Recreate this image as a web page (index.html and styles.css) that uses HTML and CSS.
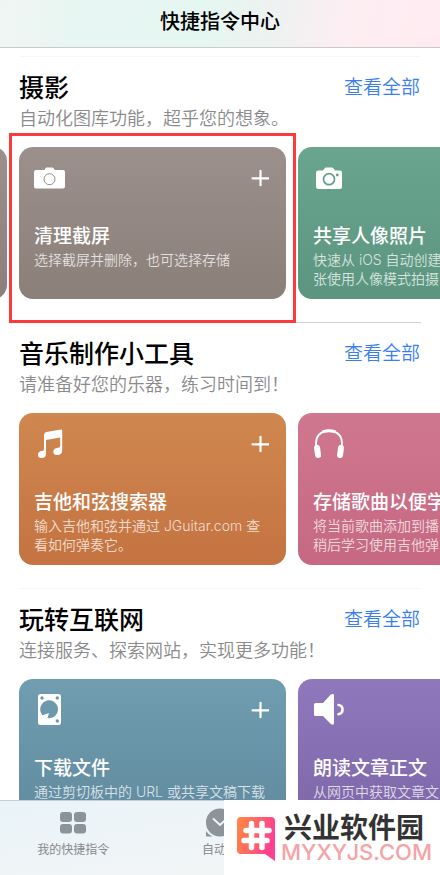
FILE: index.html
```html
<!DOCTYPE html>
<html lang="zh-CN">
<head>
<meta charset="utf-8">
<meta name="viewport" content="width=device-width, initial-scale=1">
<title>快捷指令中心</title>
<link rel="stylesheet" href="styles.css">
</head>
<body>
<svg class="sprite" aria-hidden="true">
  <symbol id="plus" viewBox="0 0 18 18"><path d="M9.500 1.800v14.400M1.500 9.300h16" fill="none" stroke="#fff" stroke-width="2.200" stroke-linecap="round"/></symbol>
</svg>
<div class="app">
  <header class="navbar"><h1 class="navbar-title">快捷指令中心</h1></header>

  <main class="gallery">
    <section class="group group-front">
      <div class="group-head">
        <h2 class="group-title">摄影</h2>
        <a class="group-link" href="#">查看全部</a>
        <p class="group-note">自动化图库功能，超乎您的想象。</p>
      </div>
      <div class="rail">
        <article class="card card-brown card-passed"></article>
        <article class="card card-brown">
          <div class="card-top">
            <svg class="card-icon" viewBox="0 0 32 32" aria-hidden="true"><path fill="#fff" d="M2 8h8.300l1-1.600Q11.700 5.500 12.800 5.500h5.400q1.100 0 1.500.9l1 1.600H29q2 0 2 2v14.500q0 2-2 2H2q-2 0-2-2V10q0-2 2-2z"/><circle cx="15.500" cy="17.200" r="5.500" fill="none" stroke="#958a84" stroke-width="1"/></svg>
            <button class="add" type="button" aria-label="添加"><svg class="add-icon" aria-hidden="true"><use href="#plus"/></svg></button>
          </div>
          <h3 class="card-title">清理截屏</h3>
          <p class="card-text">选择截屏并删除，也可选择存储</p>
        </article>
        <article class="card card-green">
          <div class="card-top">
            <svg class="card-icon" viewBox="0 0 32 32" aria-hidden="true"><path fill="#fff" d="M5.500 8.500H10l1.500-2q.6-1 1.700-1h5.600q1.100 0 1.700 1l1.500 2H27q2 0 2 2v14.200q0 2.300-2 2.300H5.500Q3 27 3 24.700V10.500q0-2 2.500-2z"/><circle cx="16" cy="17.200" r="5.500" fill="none" stroke="#649e88" stroke-width="1.700"/><circle cx="24.300" cy="13" r="1.400" fill="#649e88"/></svg>
          </div>
          <h3 class="card-title">共享人像照片</h3>
          <p class="card-text">快速从 iOS 自动创建<br>张使用人像模式拍摄</p>
        </article>
      </div>
      <div class="highlight"></div>
    </section>

    <section class="group group-ruled">
      <div class="group-head">
        <h2 class="group-title">音乐制作小工具</h2>
        <a class="group-link" href="#">查看全部</a>
        <p class="group-note">请准备好您的乐器，练习时间到！</p>
      </div>
      <div class="rail">
        <article class="card card-orange">
          <div class="card-top">
            <svg class="card-icon" viewBox="0 0 32 32" aria-hidden="true"><path fill="#fff" d="M10 7q0-2.600 2.400-3L27 1.600q1.200-.2 1.200 1v20q0 4.400-5 4.400-3.900 0-3.900-3.100 0-3 3.600-3.800l2-.5q1.300-.4 1.300-1.800V9.500L12 12v13.500q0 4.500-4.500 4.500Q4 30 4 26.800q0-2.900 3.400-3.700l1.400-.3Q10 22.500 10 21z"/></svg>
            <button class="add" type="button" aria-label="添加"><svg class="add-icon" aria-hidden="true"><use href="#plus"/></svg></button>
          </div>
          <h3 class="card-title">吉他和弦搜索器</h3>
          <p class="card-text">输入吉他和弦并通过 JGuitar.com 查<br>看如何弹奏它。</p>
        </article>
        <article class="card card-pink">
          <div class="card-top">
            <svg class="card-icon" viewBox="0 0 32 32" aria-hidden="true"><path d="M3.200 18C2 8 7.500 3 16 3S30 8 28.800 18" fill="none" stroke="#fff" stroke-width="2"/><path d="M9.500 3.800Q16 1.600 22.500 3.800" fill="none" stroke="#fff" stroke-width="3"/><rect x="1.500" y="17" width="6" height="13" rx="2.800" fill="#fff" transform="rotate(-8 4 23)"/><rect x="24.600" y="17" width="6" height="13" rx="2.800" fill="#fff" transform="rotate(8 27 23)"/></svg>
          </div>
          <h3 class="card-title">存储歌曲以便学</h3>
          <p class="card-text">将当前歌曲添加到播<br>稍后学习使用吉他弹</p>
        </article>
      </div>
    </section>

    <section class="group">
      <div class="group-head">
        <h2 class="group-title">玩转互联网</h2>
        <a class="group-link" href="#">查看全部</a>
        <p class="group-note">连接服务、探索网站，实现更多功能！</p>
      </div>
      <div class="rail">
        <article class="card card-teal">
          <div class="card-top">
            <svg class="card-icon" viewBox="0 0 32 32" aria-hidden="true"><rect x="4" y="0" width="23" height="31" rx="2.500" fill="#fff"/><g fill="#6c99ac"><circle cx="8" cy="4" r="1.700"/><circle cx="23.300" cy="4" r="1.700"/><circle cx="23.300" cy="27" r="1.700"/><path d="M8.500 21.200A8.900 8.900 0 1 1 13.600 24L15 19z"/></g></svg>
            <button class="add" type="button" aria-label="添加"><svg class="add-icon" aria-hidden="true"><use href="#plus"/></svg></button>
          </div>
          <h3 class="card-title">下载文件</h3>
          <p class="card-text">通过剪切板中的 URL 或共享文稿下载</p>
        </article>
        <article class="card card-purple">
          <div class="card-top">
            <svg class="card-icon" viewBox="0 0 32 32" aria-hidden="true"><path fill="#fff" d="M2.500 9H10L17.800.6Q21-1 21 1.500v27.600q0 2.500-3.200 1L10 22H2.500Q1 22 1 20.500v-10Q1 9 2.500 9z"/><path d="M25.500 11q4 .6 4 4.600t-4 4.600" fill="none" stroke="#fff" stroke-width="2.600" stroke-linecap="round"/></svg>
          </div>
          <h3 class="card-title">朗读文章正文</h3>
          <p class="card-text">从网页中获取文章文</p>
        </article>
      </div>
    </section>
  </main>

  <footer class="dock">
    <nav class="tabs">
      <a class="tab" href="#">
        <svg class="tab-icon" viewBox="0 0 30 30" aria-hidden="true"><g fill="#8b9498"><rect x="2" y="4" width="12" height="10" rx="3"/><rect x="16" y="4" width="12" height="10" rx="3"/><rect x="2" y="16" width="12" height="9.500" rx="3"/><rect x="16" y="16" width="12" height="9.500" rx="3"/></g></svg>
        <span>我的快捷指令</span>
      </a>
      <a class="tab" href="#">
        <svg class="tab-icon" viewBox="0 0 30 30" aria-hidden="true"><circle cx="15" cy="14.500" r="14" fill="#8b9498"/><path d="M8 10.500l7 6.500 7-6.500" fill="none" stroke="#eef4f6" stroke-width="2"/><path d="M1 23q2.500 4 6.500 5.500H1z" fill="#8b9498"/></svg>
        <span>自动化</span>
      </a>
    </nav>
    <div class="brand">
      <svg class="brand-mark" viewBox="0 0 38 46" aria-hidden="true">
        <defs><linearGradient id="warm" x1="0" y1="0" x2="1" y2="0.300"><stop offset="0" stop-color="#ff8a3c"/><stop offset="1" stop-color="#ff4090"/></linearGradient></defs>
        <path fill="url(#warm)" d="M4 1h30q4 0 4 4v40l-10-7H4q-4 0-4-4V5q0-4 4-4z"/>
        <path d="M14.500 7.500v24M25 7.500v24M9 14.500h23M7 24.500h23" fill="none" stroke="#fff" stroke-width="5.500" stroke-linecap="round"/>
      </svg>
      <div class="brand-words">
        <strong class="brand-name">兴业软件园</strong>
        <span class="brand-site">MYXYJS.COM</span>
      </div>
    </div>
  </footer>
</div>
</body>
</html>
```
FILE: styles.css
```css
* { box-sizing: border-box; }

body {
  margin: 0;
  background: #fff;
  color: #000;
  font-family: Inter, "Noto Sans CJK SC", sans-serif;
}

h1, h2, h3, p { margin: 0; }
a { text-decoration: none; }
.sprite { position: absolute; width: 0; height: 0; }

.app {
  display: flex;
  flex-direction: column;
  height: 100vh;
  overflow: hidden;
}

.navbar {
  flex: none;
  padding: 7px 0 10px;
  border-bottom: 1px solid #c9cbcc;
  background: linear-gradient(97deg, #f0f5f3 0%, #e7f6f2 18%, #e6f6f1 48%, #eff1f1 64%, #fceef2 78%, #ffebf1 100%);
  text-align: center;
}
.navbar-title {
  font-size: 20px;
  font-weight: 500;
  line-height: 30px;
}

.gallery {
  flex: 1;
  min-height: 0;
  padding-top: 8px;
  overflow: hidden;
}

.group {
  position: relative;
  padding-bottom: 23px;
}
.group-front { z-index: 1; }
.group-head {
  display: grid;
  grid-template-columns: 1fr auto;
  align-items: center;
  margin: 0 19px 14px;
  padding-top: 14px;
  border-top: 1px solid #f7f7f7;
}
.group-ruled .group-head { border-top-color: #d2d2d4; }
.group-title {
  font-size: 25px;
  font-weight: 500;
  line-height: 34px;
}
.group-link {
  padding-right: 1px;
  color: #3a7ff2;
  font-size: 19px;
  font-weight: 350;
  line-height: 34px;
}
.group-note {
  grid-column: 1 / -1;
  color: #8a8a8c;
  font-size: 18px;
  font-weight: 350;
  line-height: 28px;
}

.rail {
  display: flex;
  gap: 12px;
  padding-left: 19px;
  overflow: hidden;
}
.card {
  flex: none;
  width: 267px;
  height: 152px;
  padding: 15px;
  border-radius: 14px;
  color: #fff;
}
.card-passed { margin-left: -279px; }
.card-brown { background: linear-gradient(#9b908b, #8b7f7a); }
.card-green { background: linear-gradient(#6aa58f, #5b957f); }
.card-orange { background: linear-gradient(#d0874f, #c47341); }
.card-pink { background: linear-gradient(#d07790, #c66881); }
.card-teal { background: linear-gradient(#709db0, #608a9d); }
.card-purple { background: linear-gradient(#8f78bb, #7c66a8); }

.card-top {
  display: flex;
  align-items: center;
  justify-content: space-between;
  margin-bottom: 30px;
}
.card-icon { width: 32px; height: 32px; }
.add {
  display: flex;
  padding: 2px;
  border: 0;
  background: none;
}
.add-icon { width: 18px; height: 18px; }
.card-title {
  font-size: 19px;
  font-weight: 500;
  line-height: 26px;
  white-space: nowrap;
}
.card-text {
  color: rgba(255, 255, 255, 0.75);
  font-size: 14px;
  font-weight: 350;
  line-height: 19px;
  white-space: nowrap;
}

.highlight {
  position: absolute;
  top: 77px;
  left: 9px;
  width: 287px;
  height: 190px;
  border: 3px solid #fb3a3c;
}

.dock {
  position: relative;
  z-index: 2;
  flex: none;
  border-top: 1px solid #c6ced2;
  background: linear-gradient(170deg, #e9f4f8, #eff4f6 50%, #f6f6f6);
}
.tabs {
  display: grid;
  grid-template-columns: repeat(3, 1fr);
  padding: 7px 0 16px;
}
.tab {
  display: flex;
  flex-direction: column;
  align-items: center;
  gap: 3px;
  color: #85898c;
  font-size: 12px;
  line-height: 18px;
}
.tab-icon { width: 30px; height: 30px; }

.brand {
  position: absolute;
  top: -1px;
  right: 0;
  bottom: 0;
  display: flex;
  gap: 6px;
  width: 216px;
  padding: 16px 0 0 13px;
  background: #fff;
}
.brand-mark { flex: none; width: 38px; height: 46px; }
.brand-words {
  display: flex;
  flex-direction: column;
}
.brand-name {
  padding-left: 3px;
  color: #333;
  font-size: 28px;
  font-weight: 700;
  line-height: 24px;
}
.brand-site {
  color: #f5a3a5;
  font-size: 22px;
  font-weight: 500;
  line-height: 24px;
}
```
